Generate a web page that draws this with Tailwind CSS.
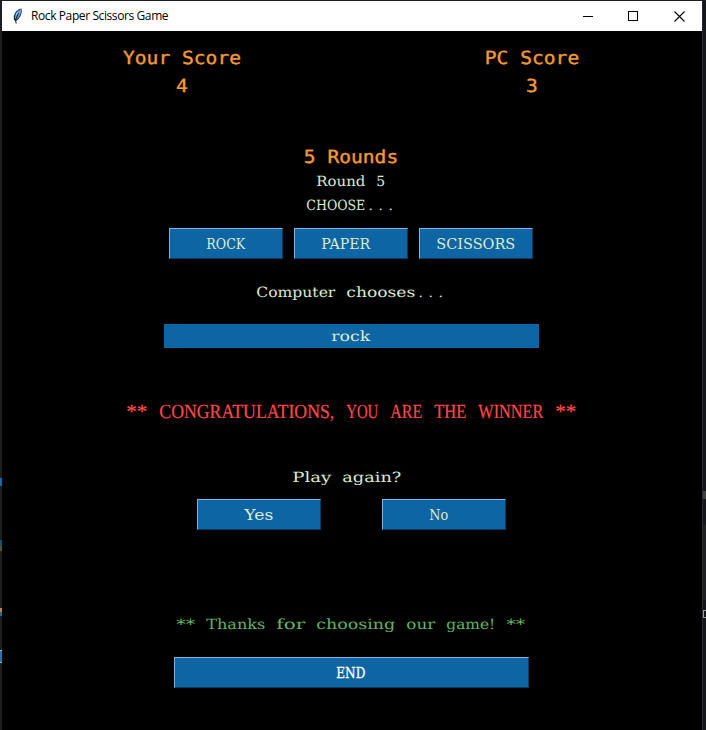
<!DOCTYPE html>
<html lang="en">
<head>
<meta charset="utf-8">
<title>Rock Paper Scissors Game</title>
<script src="https://cdn.jsdelivr.net/npm/@tailwindcss/browser@4"></script>
</head>
<body class="w-[706px] h-[730px] overflow-hidden bg-[#1d1e21] flex pt-px pl-[2px] relative">
<main class="w-[700px] h-[729px] bg-black flex flex-col items-center pr-[2px] font-['DejaVu_Serif',serif] text-[14px] text-[#dcebcf] [text-rendering:geometricPrecision]">
  <header class="w-[700px] self-start h-[30px] shrink-0 bg-white text-black flex items-center">
    <svg class="ml-[10px] w-[12px] h-[18px] shrink-0" viewBox="0 0 12 18"><path d="M2 13C.8 8 4 2.5 9.5 1.5C10.5 6 8 12 4 14Z" fill="#16202b"/><path d="M3 11.8C2.2 7.5 5.5 3.2 9.2 2.1C9.7 6 7.5 10.4 4.5 12.6Z" fill="#5b9fe0"/><path d="M6.5 6L3.5 13L4.2 16.5" stroke="#111820" stroke-width="1" fill="none"/><path d="M6 4.8L4.2 8" stroke="#cbe2f5" stroke-width=".8"/></svg>
    <span class="ml-[7px] font-['Open_Sans',sans-serif] text-[12px] tracking-[-0.4px] whitespace-nowrap [text-rendering:auto]">Rock Paper Scissors Game</span>
    <div class="ml-auto flex items-center pr-[17px]">
      <svg class="w-[10px] h-[11px] mr-[35px]" viewBox="0 0 10 11" shape-rendering="crispEdges"><path d="M0 5h10v1H0z"/></svg>
      <svg class="w-[10px] h-[10px] mr-[36px]" viewBox="0 0 10 10" shape-rendering="crispEdges" fill="none" stroke="#000"><path d="M.5.5h9v9h-9z"/></svg>
      <svg class="w-[11px] h-[11px]" viewBox="0 0 11 11" fill="none" stroke="#000" stroke-width="1.1"><path d="M.5.5l10 10M10.5.5l-10 10"/></svg>
    </div>
  </header>
  <section class="mt-[13px] w-[700px] self-start flex text-center text-[#f79a36] font-['DejaVu_Sans_Mono',monospace] text-[19.6px] leading-[28px] [-webkit-text-stroke:0.4px]">
    <div class="w-[350px] pl-[10px]"><div class="scale-y-92">Your Score</div><div class="scale-y-92">4</div></div>
    <div class="w-[350px] pl-[10px]"><div class="scale-y-92">PC Score</div><div class="scale-y-92">3</div></div>
  </section>
  <div class="mt-[44px] h-[25px] text-[#f79a36] font-['DejaVu_Sans_Mono',monospace] text-[19.6px] leading-[28px] scale-y-92 [-webkit-text-stroke:0.4px]">5 Rounds</div>
  <svg class="h-[24px] fill-current shrink-0" data-cell="10" data-line="Round 5"></svg>
  <svg class="h-[24px] fill-current shrink-0" data-cell="10" data-line="CHOOSE..."></svg>
  <div class="mt-[11px] flex gap-[11px]">
    <button class="w-[114px] h-[31px] flex items-center justify-center bg-[#0e65a3] border border-t-[#7fb4e4] border-l-[#7fb4e4] border-b-[#073b64] border-r-[#073b64]"><svg class="h-[25px] fill-current" data-cell="10" data-base="17.5" data-line="ROCK"></svg></button>
    <button class="w-[114px] h-[31px] pr-[10px] flex items-center justify-center bg-[#0e65a3] border border-t-[#7fb4e4] border-l-[#7fb4e4] border-b-[#073b64] border-r-[#073b64]"><svg class="h-[25px] fill-current" data-cell="10" data-base="17.5" data-line="PAPER"></svg></button>
    <button class="w-[114px] h-[31px] flex items-center justify-center bg-[#0e65a3] border border-t-[#7fb4e4] border-l-[#7fb4e4] border-b-[#073b64] border-r-[#073b64]"><svg class="h-[25px] fill-current" data-cell="10" data-base="17.5" data-line="SCISSORS"></svg></button>
  </div>
  <svg class="mt-[21px] h-[24px] fill-current shrink-0" data-cell="10" data-line="Computer chooses..."></svg>
  <div class="mt-[20px] w-[375px] h-[24px] bg-[#0e65a3] flex justify-center"><svg class="h-[24px] fill-current" data-cell="10" data-line="rock"></svg></div>
  <svg class="mt-[50px] h-[28px] fill-[#ff4848] stroke-[#ff4848] [stroke-width:0.2px] font-['Liberation_Serif',serif] text-[20px] shrink-0" data-cell="11" data-base="20" data-line="** CONGRATULATIONS, YOU ARE THE WINNER **"></svg>
  <svg class="mt-[39px] -ml-[8px] h-[24px] fill-current shrink-0" data-cell="10" data-line="Play again?"></svg>
  <div class="mt-[10px] flex gap-[61px]">
    <button class="w-[124px] h-[31px] flex items-center justify-center bg-[#0e65a3] border border-t-[#7fb4e4] border-l-[#7fb4e4] border-b-[#073b64] border-r-[#073b64]"><svg class="h-[25px] fill-current" data-cell="10" data-base="17.5" data-line="Yes"></svg></button>
    <button class="w-[124px] h-[31px] pr-[10px] flex items-center justify-center bg-[#0e65a3] border border-t-[#7fb4e4] border-l-[#7fb4e4] border-b-[#073b64] border-r-[#073b64]"><svg class="h-[25px] fill-current" data-cell="10" data-base="17.5" data-line="No"></svg></button>
  </div>
  <svg class="mt-[82px] h-[24px] fill-[#62b561] shrink-0" data-cell="10" data-line="** Thanks for choosing our game! **"></svg>
  <button class="mt-[21px] w-[355px] h-[31px] flex items-center justify-center text-white bg-[#0e65a3] border border-t-[#7fb4e4] border-l-[#7fb4e4] border-b-[#073b64] border-r-[#073b64]"><svg class="h-[25px] fill-current stroke-current [stroke-width:0.3px]" data-cell="10" data-base="17.5" data-line="END"></svg></button>
</main>
<aside class="w-[4px] h-[729px] bg-[#15161b] border-l border-[#2a2b30] flex flex-col">
  <div class="mt-[490px] h-[8px] bg-[#404143]"></div>
  <div class="mt-[26px] h-[75px] bg-[#1f2022]"></div>
  <div class="mt-[10px] h-[8px] border border-r-0 border-[#9a9da3]"></div>
</aside>
<div class="absolute left-0 top-[478px] w-[2px] flex flex-col">
  <div class="h-[8px] bg-[#1766a5]"></div>
  <div class="mt-[54px] h-[6px] bg-[#1d4e70]"></div>
  <div class="h-[5px] bg-[#59522c]"></div>
  <div class="mt-[57px] h-[4px] bg-[#b98a45]"></div>
  <div class="h-[4px] bg-[#2c6797]"></div>
  <div class="mt-[34px] h-[13px] bg-[#2f70ad] border-y border-[#a6b9c8]"></div>
</div>
<script>
// Sets each word of a line on a fixed-pitch grid.
for (const svg of document.querySelectorAll('svg[data-line]')) {
  const cell = +svg.dataset.cell, line = svg.dataset.line;
  svg.style.width = line.length * cell + 'px';
  svg.style.overflow = 'visible';
  for (const m of line.matchAll(/\.+|[^\s.]+/g)) {
    const t = document.createElementNS('http://www.w3.org/2000/svg', 'text');
    const dots = m[0][0] === '.';
    t.setAttribute('y', svg.dataset.base || 17);
    t.setAttribute('x', m.index * cell + (dots ? 2.5 : 0.3));
    if (m[0].length > 1) {
      t.setAttribute('textLength', m[0].length * cell - (dots ? 5.5 : 1));
      t.setAttribute('lengthAdjust', dots ? 'spacing' : 'spacingAndGlyphs');
    }
    t.textContent = m[0];
    svg.append(t);
  }
}
</script>
</body>
</html>
